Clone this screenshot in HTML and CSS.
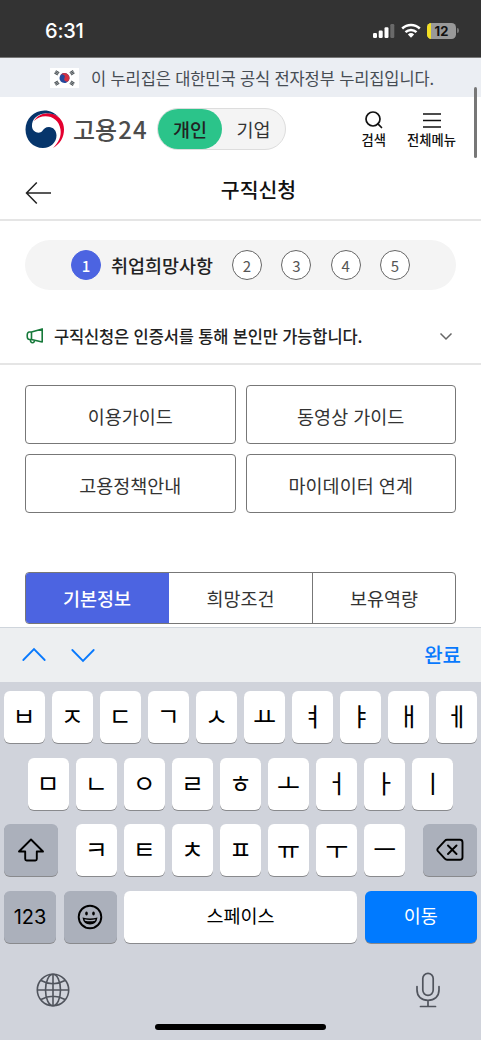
FILE: index.html
```html
<!DOCTYPE html>
<html lang="ko">
<head>
<meta charset="utf-8">
<meta name="viewport" content="width=device-width, initial-scale=1">
<title>구직신청</title>
<link rel="stylesheet" href="styles.css">
</head>
<body>
<div class="phone">
  <div class="status">
    <span class="time">6:31</span>
    <div class="status-icons">
      <svg class="signal" width="22" height="16" viewBox="0 0 22 16"><g fill="#fff"><rect x="0" y="10" width="4" height="5" rx="1.2"/><rect x="5.7" y="7.5" width="4" height="7.5" rx="1.2"/><rect x="11.5" y="4.3" width="4" height="10.7" rx="1.2"/><rect x="17.3" y="1" width="4" height="14" rx="1.2" opacity=".27"/></g></svg>
      <svg class="wifi" width="20" height="16" viewBox="0 0 20 16"><g fill="none" stroke="#fff" stroke-width="2.5"><path d="M1.2 5.5C6.2.8 13.8.8 18.800 5.500"/><path d="M4.500 9.100C7.600 6.200 12.400 6.200 15.500 9.100"/></g><path d="M6.900 11.400Q10 8.800 13.100 11.400L10 14.800Z" fill="#fff"/></svg>
      <div class="battery"><span class="battery-level"></span><span class="battery-text">12</span></div>
      <span class="battery-tip"></span>
    </div>
  </div>

  <div class="gov">
    <svg class="flag" width="29" height="20" viewBox="0 0 29 20"><rect width="29" height="20" fill="#fff"/><g transform="rotate(25 14.5 10)"><circle cx="14.5" cy="10" r="5" fill="#25499d"/><path d="M9.5 10a5 5 0 0 1 10 0a2.5 2.5 0 0 1-5 0a2.5 2.500 0 0 0-5 0z" fill="#d33042"/></g><g stroke="#4f565a" stroke-width="4" stroke-dasharray="1.1 .3"><path d="M5.800 6.500L7.900 3.100"/><path d="M21.100 3.100L23.200 6.500"/><path d="M5.800 13.500L7.900 16.900"/><path d="M21.100 16.900L23.200 13.500"/></g></svg>
    <span>이 누리집은 대한민국 공식 전자정부 누리집입니다.</span>
  </div>

  <header class="header">
    <svg class="logo" width="40" height="39" viewBox="0 0 40 39"><path d="M9 11C12 5 20 1.500 28 4C35 6.500 39 12 39 19.500C39 27 35.500 33.500 28 38C34 32 36.500 26 35.500 19.500C34.300 11 28 6.300 20.500 6.300C16 6.300 12 8 9 11Z" fill="#e4002f"/><path d="M34 7.200C30 3 25 .5 19.500 .5C9 .5 .5 9 .5 19.500C.5 30 8 38 18 38C26 38 31.500 32 31.500 25.500C31.500 20.500 28 17 24 17C20.500 17 18.800 19 17.300 21C14.500 24.500 7.500 22.500 7 16.500C6.500 9 13 3.800 20.500 3.300C25.500 3 30.500 4.300 34 7.200Z" fill="#06356b"/></svg>
    <span class="brand">고용<span class="brand-num">24</span></span>
    <div class="switch"><span class="switch-on">개인</span><span class="switch-off">기업</span></div>
    <div class="tools">
      <div class="tool"><svg width="20" height="20" viewBox="0 0 20 20" fill="none" stroke="#111" stroke-width="1.700"><circle cx="9" cy="9" r="7"/><path d="M13.700 13.700L17.500 17.500" stroke-linecap="round"/></svg><span>검색</span></div>
      <div class="tool"><svg width="20" height="20" viewBox="0 0 20 20" fill="none" stroke="#111" stroke-width="1.700"><path d="M1 4H19M1 10.500H19M1 17H19"/></svg><span>전체메뉴</span></div>
    </div>
  </header>

  <div class="titlebar">
    <svg class="back" width="28" height="24" viewBox="0 0 28 24" fill="none" stroke="#222" stroke-width="1.500"><path d="M12.800 1.500L2.500 12L12.800 22.500M2.500 12H27"/></svg>
    <h1>구직신청</h1>
  </div>

  <div class="stepwrap">
    <div class="steps"><span class="dot current">1</span><b class="steplabel">취업희망사항</b><span class="dot">2</span><span class="dot">3</span><span class="dot">4</span><span class="dot">5</span></div>
  </div>

  <div class="notice">
    <svg width="18" height="18" viewBox="0 0 18 18" fill="none" stroke="#16793a" stroke-width="1.600" stroke-linejoin="round"><path d="M5.500 5L16.200 1.900V15L5.500 12.500H3.500Q1.200 12.500 1.200 8.700T3.500 5ZM5.500 5V12.500M4.300 12.500Q4.500 15.800 6.500 15.800T8.300 13"/></svg>
    <span class="notice-text">구직신청은 인증서를 통해 본인만 가능합니다.</span>
    <svg class="chev" width="14" height="9" viewBox="0 0 14 9" fill="none" stroke="#666" stroke-width="1.500"><path d="M1.500 1.500L7 7L12.500 1.500"/></svg>
  </div>

  <div class="guides"><span>이용가이드</span><span>동영상 가이드</span><span>고용정책안내</span><span>마이데이터 연계</span></div>

  <div class="tabs"><span class="tab active">기본정보</span><span class="tab">희망조건</span><span class="tab">보유역량</span></div>

  <div class="accessory">
    <svg width="24" height="16" viewBox="0 0 24 16" fill="none" stroke="#0879fd" stroke-width="1.800" stroke-linecap="round"><path d="M1.300 13L12 2L22.700 13"/></svg>
    <svg width="24" height="16" viewBox="0 0 24 16" fill="none" stroke="#0879fd" stroke-width="1.800" stroke-linecap="round"><path d="M1.300 3L12 14L22.700 3"/></svg>
    <span class="done">완료</span>
  </div>

  <div class="keyboard">
    <div class="row"><span class="key">ㅂ</span><span class="key">ㅈ</span><span class="key">ㄷ</span><span class="key">ㄱ</span><span class="key">ㅅ</span><span class="key">ㅛ</span><span class="key">ㅕ</span><span class="key">ㅑ</span><span class="key">ㅐ</span><span class="key">ㅔ</span></div>
    <div class="row"><span class="key">ㅁ</span><span class="key">ㄴ</span><span class="key">ㅇ</span><span class="key">ㄹ</span><span class="key">ㅎ</span><span class="key">ㅗ</span><span class="key">ㅓ</span><span class="key">ㅏ</span><span class="key">ㅣ</span></div>
    <div class="row spread">
      <span class="key mod"><svg width="28" height="26" viewBox="0 0 28 26" fill="none" stroke="#000" stroke-width="1.900" stroke-linejoin="round"><path d="M14 2.500L26 14.500H19.800V22Q19.800 23.500 18.300 23.500H9.700Q8.200 23.500 8.200 22V14.500H2Z"/></svg></span>
      <div class="row"><span class="key">ㅋ</span><span class="key">ㅌ</span><span class="key">ㅊ</span><span class="key">ㅍ</span><span class="key">ㅠ</span><span class="key">ㅜ</span><span class="key">ㅡ</span></div>
      <span class="key mod"><svg width="28" height="24" viewBox="0 0 28 24" fill="none" stroke="#000" stroke-width="1.900" stroke-linecap="round" stroke-linejoin="round"><path d="M11 1.800H24Q26.500 1.800 26.500 4.300V19.200Q26.500 21.700 24 21.700H11Q9.700 21.700 8.800 20.700L1.900 13.200Q.8 11.800 1.900 10.400L8.800 2.800Q9.700 1.800 11 1.800ZM12 7.500L20.500 16M20.500 7.500L12 16"/></svg></span>
    </div>
    <div class="row bottom">
      <span class="key num">123</span>
      <span class="key emoji"><svg width="26" height="26" viewBox="0 0 26 26"><circle cx="13" cy="13" r="11.300" fill="none" stroke="#000" stroke-width="1.900"/><ellipse cx="9.500" cy="9.500" rx="1.300" ry="1.900"/><ellipse cx="16.500" cy="9.500" rx="1.300" ry="1.900"/><path d="M5.500 13.500Q13 15.500 20.500 13.500Q19.500 20.500 13 20.500T5.500 13.500Z"/><path d="M7.500 15.300Q13 16.700 18.500 15.300L18 16.700Q13 18 8 16.700Z" fill="#abb0bb"/></svg></span>
      <span class="key space">스페이스</span>
      <span class="key go">이동</span>
    </div>
    <div class="dock">
      <svg width="34" height="34" viewBox="0 0 34 34" fill="none" stroke="#50545d" stroke-width="1.600"><circle cx="17" cy="17" r="15.700"/><ellipse cx="17" cy="17" rx="7.500" ry="15.700"/><path d="M17 1.300V32.700M1.300 17H32.700M5 7.500Q17 14 29 7.500M5 26.500Q17 20 29 26.500"/></svg>
      <svg width="24" height="36" viewBox="0 0 24 36" fill="none" stroke="#50545d" stroke-width="1.700" stroke-linecap="round"><rect x="6.800" y="1.300" width="10.400" height="22" rx="5.200"/><path d="M1 14.500V18C1 24.500 5.500 28.300 12 28.300S23 24.500 23 18V14.500M12 28.300V34.500M4.500 34.500H19.500"/></svg>
    </div>
    <div class="home"></div>
  </div>
  <div class="scrollbar"></div>
</div>
</body>
</html>
```
FILE: styles.css
```css
* { box-sizing: border-box; }
body { margin: 0; font-family: "Noto Sans CJK KR", sans-serif; color: #222; background: #fff; }
svg { display: block; flex: none; }
.phone { position: relative; width: 481px; height: 1040px; overflow: hidden; display: flex; flex-direction: column; background: #fff; }
.phone > * { flex: none; }

.status { height: 58px; background: #333; border-bottom: 1px solid #777; display: flex; justify-content: space-between; padding: 20px 22px 0 45px; color: #fff; }
.time { font: 500 20px/22px Inter, sans-serif; letter-spacing: -.2px; }
.status-icons { display: flex; align-items: center; height: 21px; }
.wifi { margin-left: 6px; }
.battery { position: relative; width: 29px; height: 16px; margin-left: 6px; border-radius: 4.500px; background: #999; overflow: hidden; }
.battery-level { position: absolute; left: 0; top: 0; width: 4px; height: 16px; background: #f3df22; }
.battery-text { position: absolute; inset: 0; text-align: center; font: 700 13px/16px Inter, sans-serif; color: #111; }
.battery-tip { width: 2px; height: 5px; margin-left: 1px; background: #777; border-radius: 0 2px 2px 0; }

.gov { height: 39px; background: #ebeef3; display: flex; align-items: center; padding: 0 0 0 50px; gap: 12px; font-size: 16.500px; letter-spacing: -.13px; line-height: 24px; color: #464c53; white-space: nowrap; }

.header { height: 64px; display: flex; align-items: center; padding: 0 25px 0 25px; }
.brand { margin-left: 8px; width: 76px; font-size: 24px; line-height: 30px; font-weight: 500; color: #4c4c4c; white-space: nowrap; }
.brand-num { letter-spacing: 1.200px; margin-left: 1px; }
.switch { display: flex; width: 129px; height: 42px; margin-left: 8px; background: #f4f4f4; border: 1px solid #ddd; border-radius: 21px; font-size: 18.500px; line-height: 40px; text-align: center; }
.switch-on { width: 64px; border-radius: 20px; background: #2bc48a; font-weight: 500; }
.switch-off { flex: 1; color: #333; }
.tools { display: flex; gap: 21px; margin: 2px 0 0 auto; }
.tool { display: flex; flex-direction: column; align-items: center; font-size: 13.300px; line-height: 20px; font-weight: 500; color: #111; white-space: nowrap; }

.titlebar { height: 60px; border-bottom: 2px solid #e5e5e5; display: grid; grid-template-columns: 28px 1fr 28px; align-items: center; padding: 0 12px 0 24px; }
.back { margin-top: 6px; }
h1 { margin: 0; text-align: center; font-size: 20.500px; line-height: 28px; font-weight: 500; color: #111; padding: 0 0 2px 24px; }

.stepwrap { padding: 19px 25px 0; }
.steps { height: 50px; border-radius: 25px; background: #f4f4f4; display: flex; align-items: center; padding-left: 46px; }
.dot { width: 30px; height: 30px; border: 1px solid #666; border-radius: 50%; background: #fff; text-align: center; font-size: 15px; line-height: 29px; color: #555; margin-right: 19.300px; }
.dot.current { border-color: #4c64e1; background: #4c64e1; color: #fff; margin-right: 10px; font-weight: 500; }
.steplabel { width: 102px; margin-right: 19px; font-size: 18.500px; line-height: 28px; font-weight: 500; white-space: nowrap; }

.notice { height: 75px; border-bottom: 2px solid #e5e5e5; display: flex; align-items: center; padding: 19px 28px 0 26px; }
.notice-text { margin-left: 10px; font-size: 16.500px; letter-spacing: -.15px; line-height: 24px; font-weight: 500; white-space: nowrap; }
.chev { margin-left: auto; }

.guides { display: grid; grid-template-columns: 1fr 1fr; grid-auto-rows: 59px; gap: 10px; padding: 19.500px 25px 0; }
.guides span { border: 1px solid #777; border-radius: 4px; text-align: center; font-size: 18.500px; line-height: 60px; color: #333; }

.tabs { height: 52px; margin: 59.500px 25px 3px; display: grid; grid-template-columns: 143px 143px 1fr; border: 1px solid #777; border-radius: 4px; overflow: hidden; }
.tab { text-align: center; font-size: 18.500px; line-height: 50px; border-left: 1px solid #777; color: #333; }
.tab.active { background: #4c64e1; color: #fff; font-weight: 500; border: 0; margin: -1px 0 -1px -1px; line-height: 52px; }
.tab.active + .tab { border: 0; }

.accessory { height: 55px; background: #edeff1; border-top: 1px solid #cfd5dc; display: flex; align-items: center; padding: 0 20px 0 22px; gap: 25px; }
.done { margin-left: auto; color: #0879fd; font-size: 20px; font-weight: 500; line-height: 28px; }

.keyboard { height: 358px; background: #d0d3db; padding: 9px 4px 0; display: flex; flex-direction: column; gap: 14.500px; }
.row { display: flex; justify-content: center; gap: 7.100px; flex: none; }
.key { flex: none; width: 41px; height: 52px; border-radius: 6px; background: #fff; box-shadow: 0 1px 0 #898a8d; color: #000; text-align: center; font-size: 25px; line-height: 48px; padding-bottom: 4px; display: flex; align-items: center; justify-content: center; }
.spread { justify-content: space-between; }
.mod { width: 54px; background: #abb0bb; padding: 0; }
.bottom { gap: 7.500px; }
.num, .emoji { width: 52px; background: #abb0bb; padding: 0; }
.num { font-family: Inter, sans-serif; font-size: 20px; }
.emoji { width: 53px; }
.space { width: 233px; font-size: 18.500px; }
.go { flex: 1; background: #007aff; color: #fff; font-size: 18.500px; }
.dock { display: flex; justify-content: space-between; align-items: center; height: 36px; margin-top: 15px; padding: 0 37px 0 32px; flex: none; }
.home { position: absolute; left: 155px; top: 1024px; width: 171px; height: 6px; border-radius: 3px; background: #000; }
.scrollbar { position: absolute; left: 474px; top: 87px; width: 3px; height: 71px; border-radius: 2px; background: #777; }
```
